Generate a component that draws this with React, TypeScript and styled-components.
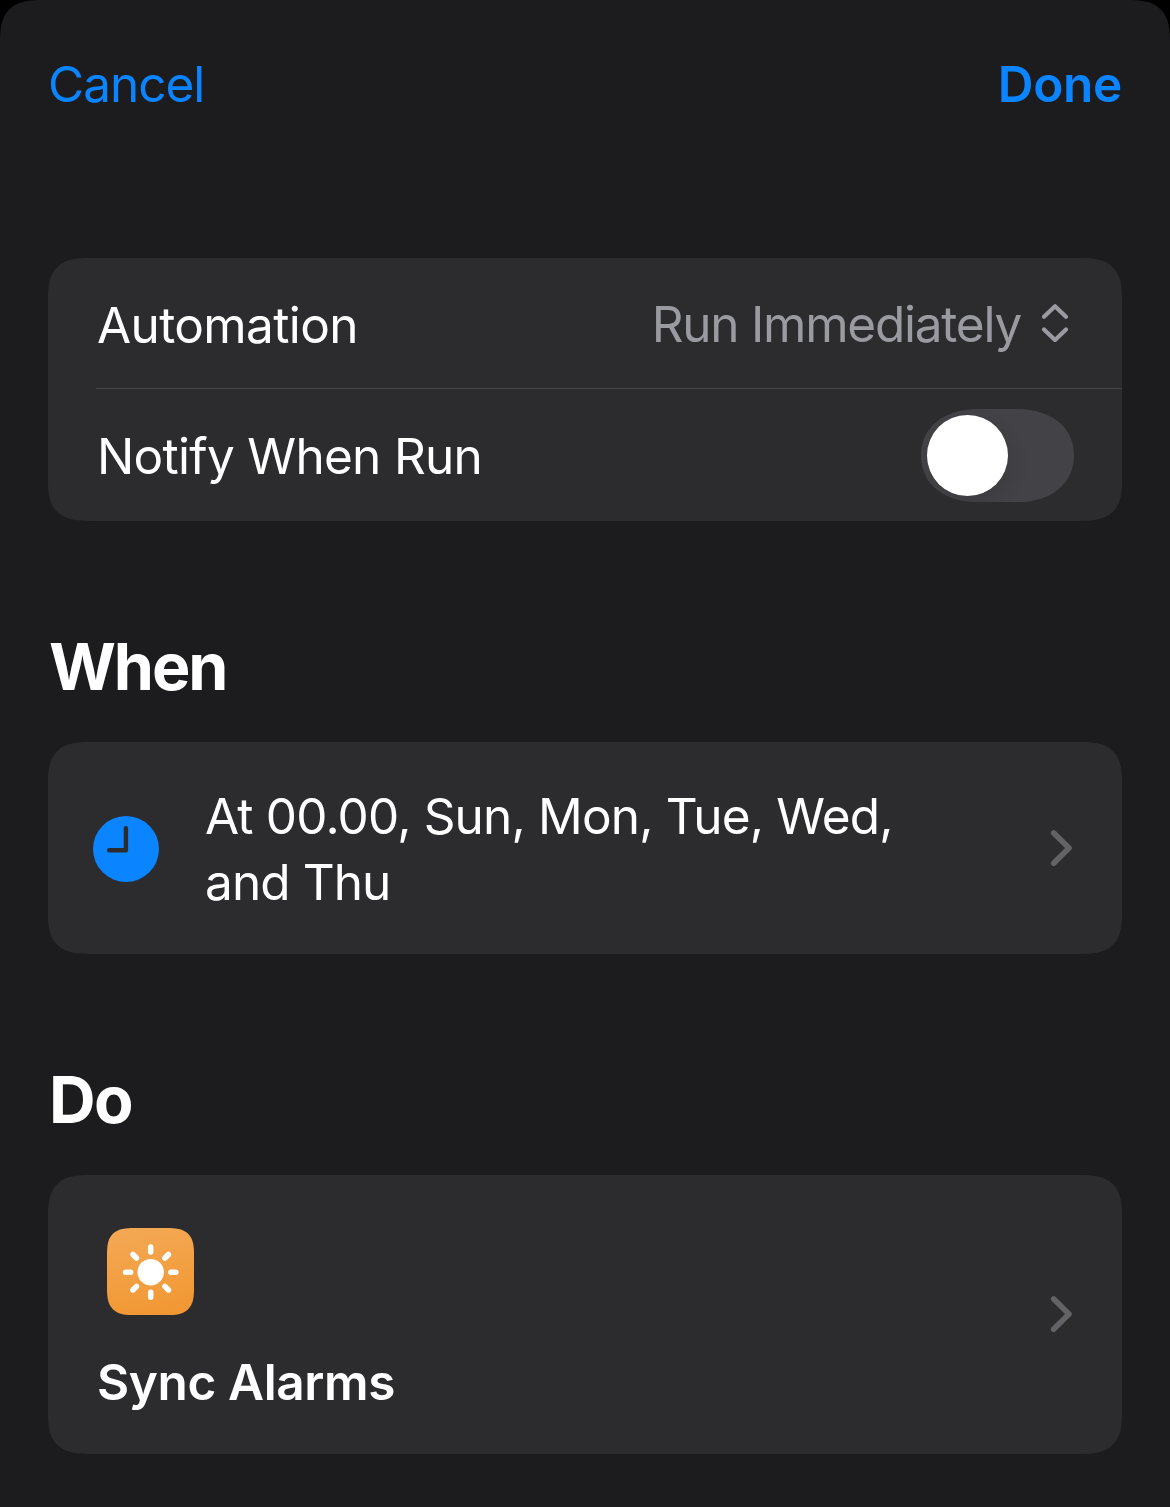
import React from "react";
import styled, { createGlobalStyle, css } from "styled-components";

const GlobalStyle = createGlobalStyle`
  *, *::before, *::after { box-sizing: border-box; }
  html, body { margin: 0; background: #000; }
  body { font-family: Inter, "Liberation Sans", sans-serif; -webkit-font-smoothing: antialiased; }
  button { font: inherit; background: none; border: 0; padding: 0; text-align: left; cursor: pointer; }
`;

// Continuous corners where the browser knows corner-shape, plain arcs elsewhere.
const smoothCorner = (arc: string, smooth: string, curve = 1.5) => css`
  border-radius: ${arc};
  @supports (corner-shape: superellipse(1.5)) {
    border-radius: ${smooth};
    corner-shape: superellipse(${curve});
  }
`;

const Sheet = styled.div`
  width: 1170px;
  height: 1507px;
  overflow: hidden;
  background: #1c1c1e;
  ${smoothCorner("33px 33px 0 0", "43px 43px 0 0")}
  padding: 0 48px;
  display: flex;
  flex-direction: column;
`;

const NavBar = styled.header`
  height: 258px;
  padding: 54px 0 0;
  display: flex;
  justify-content: space-between;
  align-items: flex-start;
`;

const Text = styled.span<{ $weight?: number; $tracking?: number; $tone?: string }>`
  display: block;
  font-size: 49.5px;
  line-height: 60px;
  white-space: nowrap;
  font-weight: ${(p) => p.$weight ?? 400};
  letter-spacing: ${(p) => p.$tracking ?? 0}px;
  color: ${(p) => p.$tone ?? "#fff"};
`;

const Card = styled.section`
  background: #2c2c2e;
  ${smoothCorner("32px", "42px")}
  flex: none;
`;

const Row = styled.div<{ $height: number; $divided?: boolean }>`
  height: ${(p) => p.$height}px;
  margin-left: 48px;
  padding: 0 48px 0 1px;
  display: flex;
  align-items: center;
  justify-content: space-between;
  border-bottom: ${(p) => (p.$divided ? "1px solid #434345" : "0")};

  ${Text} {
    padding-top: 2px;
  }

  > ${Text} {
    padding-top: ${(p) => (p.$divided ? 4 : 2)}px;
  }
`;

const Picker = styled.button`
  display: flex;
  align-items: center;
  gap: 19px;
  padding-right: 4px;
`;

const Switch = styled.button`
  width: 153px;
  height: 93px;
  && { background: #434247; padding: 6px; }
  ${smoothCorner("47px", "56px / 46.5px", 1.1)}
  overflow: hidden;
  display: flex;
`;

const Knob = styled.span`
  width: 81px;
  height: 81px;
  border-radius: 50%;
  background: #fff;
  box-shadow: 4px 8px 18px rgba(0, 0, 0, 0.1);
`;

const Heading = styled.h2<{ $height: number; $tracking: number }>`
  height: ${(p) => p.$height}px;
  margin: 0;
  padding: 0 0 35px 1px;
  display: flex;
  align-items: flex-end;
  flex: none;
  color: #fff;
  font-size: 64.5px;
  line-height: 80px;
  font-weight: 700;
  letter-spacing: ${(p) => p.$tracking}px;
`;

const TriggerRow = styled.div`
  height: 212px;
  padding: 2px 50px 0 45px;
  display: grid;
  grid-template-columns: 66px 1fr 24px;
  column-gap: 46px;
  align-items: center;
`;

const Lines = styled.div`
  display: grid;
  grid-auto-rows: 66px;
  align-items: center;
`;

const ActionRow = styled.div`
  height: 279px;
  padding-right: 50px;
  display: flex;
  align-items: center;
  justify-content: space-between;
`;

const Action = styled.div`
  height: 100%;
  padding: 53px 0 0 49px;
  display: flex;
  flex-direction: column;
  gap: 37px;
`;

const AppTile = styled.div`
  width: 87px;
  height: 87px;
  margin-left: 10px;
  ${smoothCorner("20px", "27px")}
  background: linear-gradient(168deg, #f4a956, #f19630);
`;

const Icon = styled.svg`
  display: block;
  flex: none;
`;

const ChevronRight = () => (
  <Icon width="24" height="40" viewBox="0 0 24 40" fill="none" stroke="#636367" strokeWidth="5.6" strokeLinecap="round" strokeLinejoin="round">
    <path d="M5.7 3.9 L21 19.1 L5.7 34.3" />
  </Icon>
);

const UpDown = () => (
  <Icon width="30" height="42" viewBox="0 0 30 42" fill="none" stroke="#9a9aa1" strokeWidth="4.2" strokeLinecap="round" strokeLinejoin="round">
    <path d="M4 14.7 L15 4.2 L26 14.7 M4 27.4 L15 37.9 L26 27.4" />
  </Icon>
);

const Clock = () => (
  <Icon width="66" height="66" viewBox="0 0 66 66" fill="none">
    <circle cx="33" cy="33" r="33" fill="#0a84ff" />
    <path d="M32.9 12.3 V34.2 H16.2" stroke="#2c2c2e" strokeWidth="4.4" strokeLinecap="round" strokeLinejoin="round" />
  </Icon>
);

const RAYS = [0, 45, 90, 135, 180, 225, 270, 315];

const Sun = () => (
  <Icon width="87" height="87" viewBox="0 0 87 87">
    <circle cx="43.7" cy="44.2" r="13.2" fill="#fff" />
    {RAYS.map((angle) => (
      <path
        key={angle}
        d="M43.7 19.1 V24.1"
        stroke="#fff"
        strokeWidth="5.5"
        strokeLinecap="round"
        transform={`rotate(${angle} 43.7 44.2)`}
      />
    ))}
  </Icon>
);

export default function App() {
  return (
    <>
      <GlobalStyle />
      <Sheet>
        <NavBar>
          <button>
            <Text $tone="#0a84ff" $tracking={-1}>Cancel</Text>
          </button>
          <button>
            <Text $tone="#0a84ff" $weight={600} $tracking={-0.3}>Done</Text>
          </button>
        </NavBar>

        <Card>
          <Row $height={131} $divided>
            <Text $tracking={-0.62}>Automation</Text>
            <Picker>
              <Text $tone="#9a9aa1" $tracking={-1.24}>Run Immediately</Text>
              <UpDown />
            </Picker>
          </Row>
          <Row $height={132}>
            <Text $tracking={-0.7}>Notify When Run</Text>
            <Switch role="switch" aria-checked="false">
              <Knob />
            </Switch>
          </Row>
        </Card>

        <Heading $height={221} $tracking={-2.1}>When</Heading>
        <Card>
          <TriggerRow>
            <Clock />
            <Lines>
              <Text $tracking={-0.82}>At 00.00, Sun, Mon, Tue, Wed,</Text>
              <Text $tracking={-0.9}>and Thu</Text>
            </Lines>
            <ChevronRight />
          </TriggerRow>
        </Card>

        <Heading $height={221} $tracking={-1.5}>Do</Heading>
        <Card>
          <ActionRow>
            <Action>
              <AppTile>
                <Sun />
              </AppTile>
              <Text $weight={600} $tracking={-0.38}>Sync Alarms</Text>
            </Action>
            <ChevronRight />
          </ActionRow>
        </Card>
      </Sheet>
    </>
  );
}
